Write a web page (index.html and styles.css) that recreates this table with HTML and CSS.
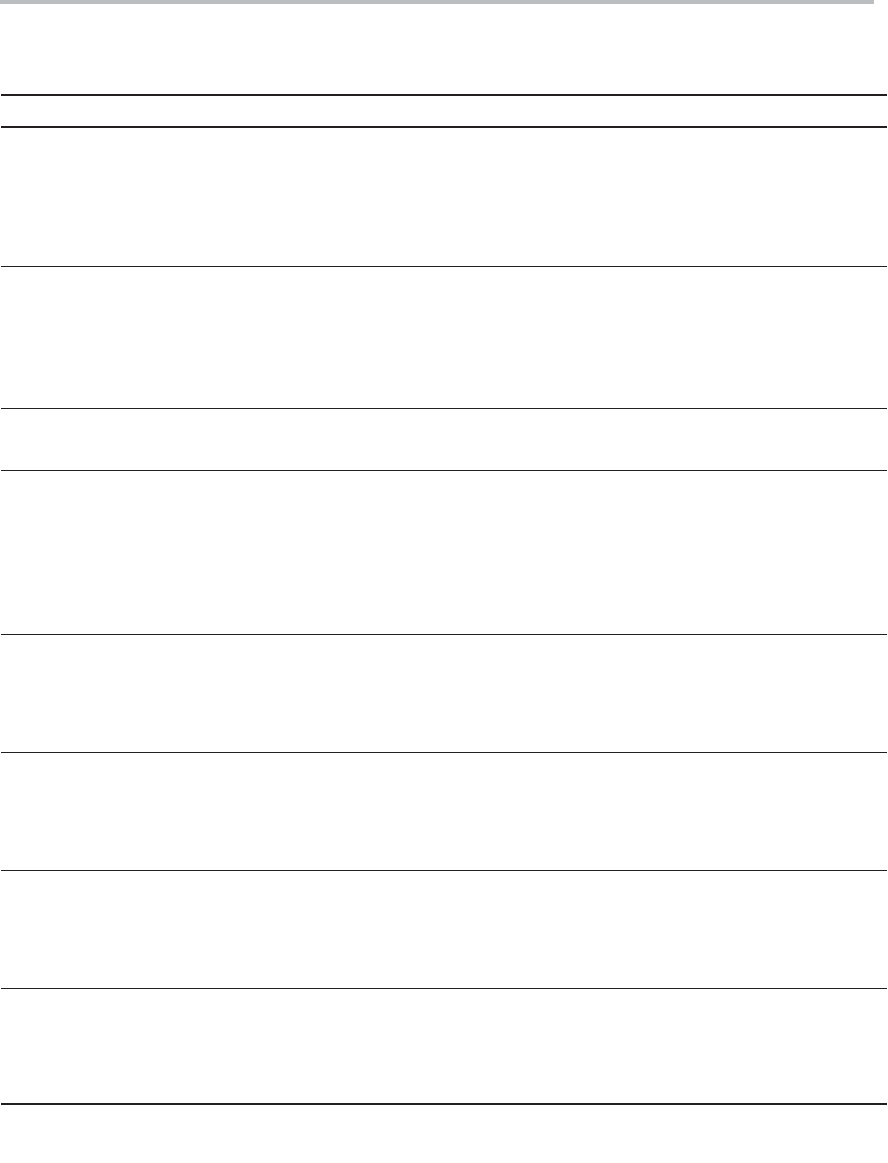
FILE: index.html
```html
<!DOCTYPE html>
<html lang="en">
<head>
<meta charset="utf-8">
<title>Table</title>
<link rel="stylesheet" href="styles.css">
</head>
<body>
<div class="topbar"></div>
<div class="sheet">
  <div class="row head"></div>
  <div class="row r1"></div>
  <div class="row r2"></div>
  <div class="row r3"></div>
  <div class="row r4"></div>
  <div class="row r5"></div>
  <div class="row r6"></div>
  <div class="row r7"></div>
  <div class="row r8"></div>
</div>
</body>
</html>
```
FILE: styles.css
```css
html, body {
  margin: 0;
  padding: 0;
  background: #ffffff;
  font-family: "Liberation Sans", Arial, sans-serif;
}
.topbar {
  width: 874px;
  height: 4px;
  background: #bcbdc0;
}
.sheet {
  margin-top: 90px;
  margin-left: 1px;
  width: 886px;
  display: flex;
  flex-direction: column;
  border-top: 2px solid #231f20;
  border-bottom: 2px solid #231f20;
}
.row {
  border-bottom: 1px solid #231f20;
}
.row.head {
  height: 30px;
  border-bottom: 2px solid #231f20;
}
.r1 { height: 138px; }
.r2 { height: 141px; }
.r3 { height: 61px; }
.r4 { height: 163px; }
.r5 { height: 117px; }
.r6 { height: 117px; }
.r7 { height: 117px; }
.r8 { height: 114px; border-bottom: none; }
```
